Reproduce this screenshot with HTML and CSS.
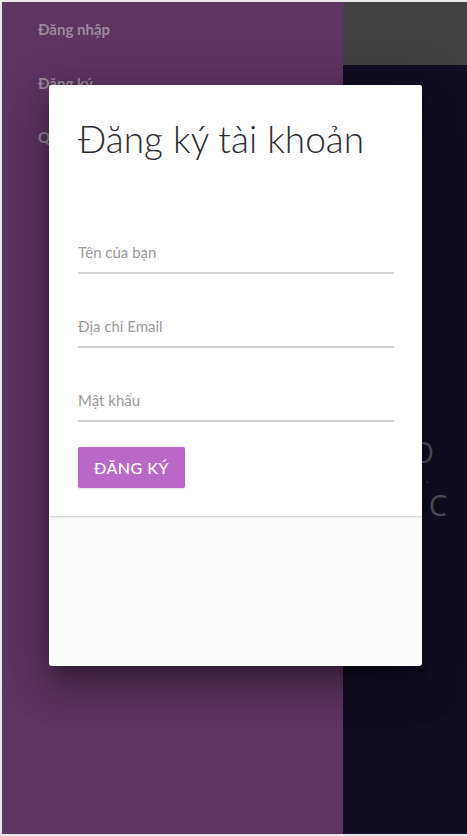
FILE: index.html
```html
<!DOCTYPE html>
<html lang="vi">
<head>
<meta charset="utf-8">
<title>Đăng ký tài khoản</title>
<link rel="stylesheet" href="styles.css">
</head>
<body>
<div class="frame">
  <nav class="drawer">
    <a class="drawer-item">Đăng nhập</a>
    <a class="drawer-item">Đăng ký</a>
    <a class="drawer-item">Quên mật khẩu</a>
  </nav>
  <main class="main">
    <header class="topbar"></header>
    <section class="content">
      <div class="hero">
        <span class="hero-line hero-line-1">HELLO</span>
        <span class="hero-dot">.</span>
        <span class="hero-line hero-line-2">AB&nbsp;&nbsp;C</span>
      </div>
    </section>
  </main>
  <div class="modal">
    <div class="modal-body">
      <h1 class="modal-title">Đăng ký tài khoản</h1>
      <form class="form">
        <label class="field"><input class="input" type="text" placeholder="Tên của bạn"></label>
        <label class="field"><input class="input" type="email" placeholder="Địa chỉ Email"></label>
        <label class="field"><input class="input" type="password" placeholder="Mật khẩu"></label>
        <button class="btn" type="button">ĐĂNG KÝ</button>
      </form>
    </div>
    <div class="modal-footer"></div>
  </div>
</div>
</body>
</html>
```
FILE: styles.css
```css
* { box-sizing: border-box; }
html, body { margin: 0; padding: 0; }
body {
  background: #e9e9ea;
  font-family: Lato, "Noto Sans", sans-serif;
  width: 467px;
  height: 836px;
  overflow: hidden;
}
.frame {
  position: relative;
  display: flex;
  margin: 2px 0 2px 2px;
  height: 832px;
  overflow: hidden;
}
.drawer {
  width: 341px;
  background: #5e3461;
  display: flex;
  flex-direction: column;
  padding: 17px 0 0 36px;
}
.drawer-item {
  display: block;
  height: 54px;
  font-size: 15px;
  font-weight: 700;
  color: #9c8a9e;
  line-height: 20px;
}
.main {
  flex: 1;
  display: flex;
  flex-direction: column;
}
.topbar {
  height: 63px;
  background: #424242;
}
.content {
  flex: 1;
  background: #110e24;
  display: flex;
  justify-content: flex-end;
  padding-top: 372px;
}
.hero {
  display: flex;
  flex-direction: column;
  align-items: flex-end;
  font-family: "Open Sans", sans-serif;
  color: #555560;
  font-size: 29px;
}
.hero-line { line-height: 30px; white-space: nowrap; }
.hero-line-1 { margin-right: 33px; }
.hero-line-2 { margin-right: 20px; }
.hero-dot {
  font-size: 12px;
  line-height: 23px;
  margin-right: 38px;
}
.modal {
  position: absolute;
  left: 47px;
  top: 83px;
  width: 373px;
  height: 581px;
  border-radius: 3px;
  background: #fafafa;
  box-shadow: 0 11px 15px -7px rgba(0,0,0,0.3), 0 24px 38px 3px rgba(0,0,0,0.2), 0 9px 46px 8px rgba(0,0,0,0.18);
  display: flex;
  flex-direction: column;
  overflow: hidden;
}
.modal-body {
  background: #fff;
  height: 431px;
  padding: 28px 28px 0 29px;
  box-shadow: 0 1px 2px rgba(0,0,0,0.18);
  position: relative;
}
.modal-title {
  margin: 0;
  font-family: Lato, "Noto Sans", sans-serif;
  font-weight: 300;
  font-size: 37px;
  line-height: 52px;
  color: #2b2d33;
}
.form {
  display: flex;
  flex-direction: column;
  margin-top: 66px;
}
.field {
  display: block;
  margin-bottom: 31px;
}
.input {
  display: block;
  width: 100%;
  border: none;
  border-bottom: 2px solid #d3d3d3;
  outline: none;
  background: transparent;
  font-family: Lato, "Noto Sans", sans-serif;
  font-size: 15px;
  height: 43px;
  padding: 0;
  color: #333;
}
.input::placeholder { color: #9a9a9a; }
.btn {
  align-self: flex-start;
  margin-top: -6px;
  width: 107px;
  height: 41px;
  border: none;
  border-radius: 2px;
  background: #ba68c8;
  color: #fff;
  font-family: Lato, "Noto Sans", sans-serif;
  font-size: 16px;
  font-weight: 500;
  letter-spacing: 0.5px;
  box-shadow: 0 1px 2px rgba(0,0,0,0.15);
}
.modal-footer { flex: 1; }
```
